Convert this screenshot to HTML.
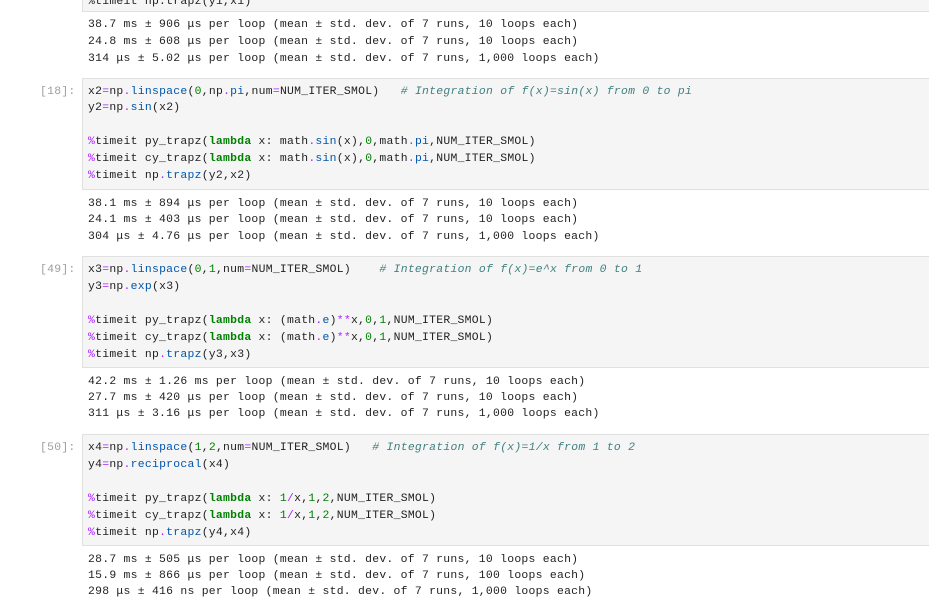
<!DOCTYPE html>
<html><head><meta charset="utf-8"><style>
body{margin:0;width:929px;height:607px;overflow:hidden;background:#fff;font-family:"Liberation Mono",monospace;font-size:11.4px;letter-spacing:0.27px;color:#212121}
.box{position:absolute;left:82px;right:-2px;background:#f5f5f5;border:1px solid #e0e0e0}
.l{position:absolute;left:88px;white-space:pre;line-height:14px;margin-top:1px}
.p{position:absolute;left:40px;width:40px;color:#9e9e9e;white-space:pre;line-height:14px;margin-top:1px}
.o{color:#aa22ff}.f{color:#0055aa}.n{color:#008000}.k{color:#008000;font-weight:bold}.c{color:#408080;font-style:italic}.m{color:#aa22ff}
</style></head><body>
<div class="box" style="top:-5px;height:15px"></div>
<div class="l" style="top:-6px">%timeit np.trapz(y1,x1)</div>
<div class="l" style="top:17px">38.7 ms ± 906 μs per loop (mean ± std. dev. of 7 runs, 10 loops each)</div>
<div class="l" style="top:34px">24.8 ms ± 608 μs per loop (mean ± std. dev. of 7 runs, 10 loops each)</div>
<div class="l" style="top:51px">314 μs ± 5.02 μs per loop (mean ± std. dev. of 7 runs, 1,000 loops each)</div>

<div class="box" style="top:78px;height:110px"></div>
<div class="p" style="top:84px">[18]:</div>
<div class="l" style="top:84px">x2<span class="o">=</span>np<span class="o">.</span><span class="f">linspace</span>(<span class="n">0</span>,np<span class="o">.</span><span class="f">pi</span>,num<span class="o">=</span>NUM_ITER_SMOL)   <span class="c"># Integration of f(x)=sin(x) from 0 to pi</span></div>
<div class="l" style="top:100px">y2<span class="o">=</span>np<span class="o">.</span><span class="f">sin</span>(x2)</div>
<div class="l" style="top:134px"><span class="m">%</span>timeit py_trapz(<span class="k">lambda</span> x: math<span class="o">.</span><span class="f">sin</span>(x),<span class="n">0</span>,math<span class="o">.</span><span class="f">pi</span>,NUM_ITER_SMOL)</div>
<div class="l" style="top:151px"><span class="m">%</span>timeit cy_trapz(<span class="k">lambda</span> x: math<span class="o">.</span><span class="f">sin</span>(x),<span class="n">0</span>,math<span class="o">.</span><span class="f">pi</span>,NUM_ITER_SMOL)</div>
<div class="l" style="top:168px"><span class="m">%</span>timeit np<span class="o">.</span><span class="f">trapz</span>(y2,x2)</div>
<div class="l" style="top:196px">38.1 ms ± 894 μs per loop (mean ± std. dev. of 7 runs, 10 loops each)</div>
<div class="l" style="top:212px">24.1 ms ± 403 μs per loop (mean ± std. dev. of 7 runs, 10 loops each)</div>
<div class="l" style="top:229px">304 μs ± 4.76 μs per loop (mean ± std. dev. of 7 runs, 1,000 loops each)</div>

<div class="box" style="top:256px;height:110px"></div>
<div class="p" style="top:262px">[49]:</div>
<div class="l" style="top:262px">x3<span class="o">=</span>np<span class="o">.</span><span class="f">linspace</span>(<span class="n">0</span>,<span class="n">1</span>,num<span class="o">=</span>NUM_ITER_SMOL)    <span class="c"># Integration of f(x)=e^x from 0 to 1</span></div>
<div class="l" style="top:279px">y3<span class="o">=</span>np<span class="o">.</span><span class="f">exp</span>(x3)</div>
<div class="l" style="top:313px"><span class="m">%</span>timeit py_trapz(<span class="k">lambda</span> x: (math<span class="o">.</span><span class="f">e</span>)<span class="o">**</span>x,<span class="n">0</span>,<span class="n">1</span>,NUM_ITER_SMOL)</div>
<div class="l" style="top:330px"><span class="m">%</span>timeit cy_trapz(<span class="k">lambda</span> x: (math<span class="o">.</span><span class="f">e</span>)<span class="o">**</span>x,<span class="n">0</span>,<span class="n">1</span>,NUM_ITER_SMOL)</div>
<div class="l" style="top:347px"><span class="m">%</span>timeit np<span class="o">.</span><span class="f">trapz</span>(y3,x3)</div>
<div class="l" style="top:374px">42.2 ms ± 1.26 ms per loop (mean ± std. dev. of 7 runs, 10 loops each)</div>
<div class="l" style="top:390px">27.7 ms ± 420 μs per loop (mean ± std. dev. of 7 runs, 10 loops each)</div>
<div class="l" style="top:406px">311 μs ± 3.16 μs per loop (mean ± std. dev. of 7 runs, 1,000 loops each)</div>

<div class="box" style="top:434px;height:110px"></div>
<div class="p" style="top:440px">[50]:</div>
<div class="l" style="top:440px">x4<span class="o">=</span>np<span class="o">.</span><span class="f">linspace</span>(<span class="n">1</span>,<span class="n">2</span>,num<span class="o">=</span>NUM_ITER_SMOL)   <span class="c"># Integration of f(x)=1/x from 1 to 2</span></div>
<div class="l" style="top:457px">y4<span class="o">=</span>np<span class="o">.</span><span class="f">reciprocal</span>(x4)</div>
<div class="l" style="top:491px"><span class="m">%</span>timeit py_trapz(<span class="k">lambda</span> x: <span class="n">1</span><span class="o">/</span>x,<span class="n">1</span>,<span class="n">2</span>,NUM_ITER_SMOL)</div>
<div class="l" style="top:508px"><span class="m">%</span>timeit cy_trapz(<span class="k">lambda</span> x: <span class="n">1</span><span class="o">/</span>x,<span class="n">1</span>,<span class="n">2</span>,NUM_ITER_SMOL)</div>
<div class="l" style="top:525px"><span class="m">%</span>timeit np<span class="o">.</span><span class="f">trapz</span>(y4,x4)</div>
<div class="l" style="top:552px">28.7 ms ± 505 μs per loop (mean ± std. dev. of 7 runs, 10 loops each)</div>
<div class="l" style="top:568px">15.9 ms ± 866 μs per loop (mean ± std. dev. of 7 runs, 100 loops each)</div>
<div class="l" style="top:584px">298 μs ± 416 ns per loop (mean ± std. dev. of 7 runs, 1,000 loops each)</div>
</body></html>
